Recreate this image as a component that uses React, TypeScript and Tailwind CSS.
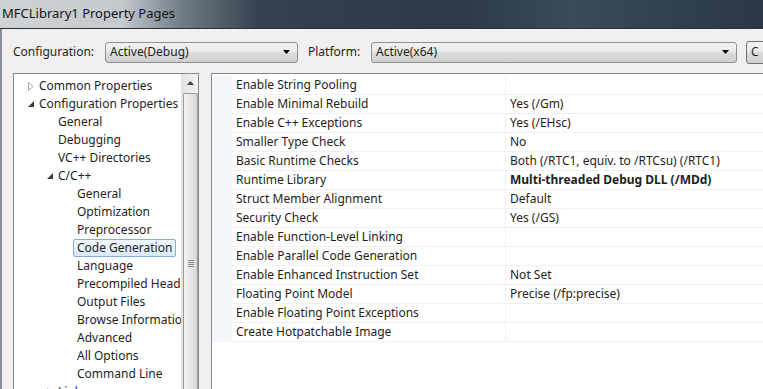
import React from "react";

const treeItems: { label: string; indent: number; expander?: "closed" | "open"; selected?: boolean }[] = [
  { label: "Common Properties", indent: 38, expander: "closed" },
  { label: "Configuration Properties", indent: 38, expander: "open" },
  { label: "General", indent: 57 },
  { label: "Debugging", indent: 57 },
  { label: "VC++ Directories", indent: 57 },
  { label: "C/C++", indent: 57, expander: "open" },
  { label: "General", indent: 76 },
  { label: "Optimization", indent: 76 },
  { label: "Preprocessor", indent: 76 },
  { label: "Code Generation", indent: 76, selected: true },
  { label: "Language", indent: 76 },
  { label: "Precompiled Headers", indent: 76 },
  { label: "Output Files", indent: 76 },
  { label: "Browse Information", indent: 76 },
  { label: "Advanced", indent: 76 },
  { label: "All Options", indent: 76 },
  { label: "Command Line", indent: 76 },
  { label: "Linker", indent: 57, expander: "closed" },
];

const props: { name: string; value: string; bold?: boolean }[] = [
  { name: "Enable String Pooling", value: "" },
  { name: "Enable Minimal Rebuild", value: "Yes (/Gm)" },
  { name: "Enable C++ Exceptions", value: "Yes (/EHsc)" },
  { name: "Smaller Type Check", value: "No" },
  { name: "Basic Runtime Checks", value: "Both (/RTC1, equiv. to /RTCsu) (/RTC1)" },
  { name: "Runtime Library", value: "Multi-threaded Debug DLL (/MDd)", bold: true },
  { name: "Struct Member Alignment", value: "Default" },
  { name: "Security Check", value: "Yes (/GS)" },
  { name: "Enable Function-Level Linking", value: "" },
  { name: "Enable Parallel Code Generation", value: "" },
  { name: "Enable Enhanced Instruction Set", value: "Not Set" },
  { name: "Floating Point Model", value: "Precise (/fp:precise)" },
  { name: "Enable Floating Point Exceptions", value: "" },
  { name: "Create Hotpatchable Image", value: "" },
];

function ComboArrow() {
  return (
    <svg width="7" height="4" viewBox="0 0 7 4">
      <path d="M0 0h7L3.5 4z" fill="#000" />
    </svg>
  );
}

function Combo({ text, width }: { text: string; width: string }) {
  return (
    <div
      className={`${width} flex h-[21px] shrink-0 items-center justify-between rounded-[3px] border border-[#8e8f8f] bg-[linear-gradient(#f2f2f2_0%,#ebebeb_45%,#dddddd_50%,#cfcfcf_100%)] pl-[4px] pr-[7px]`}
    >
      <span>{text}</span>
      <ComboArrow />
    </div>
  );
}

function Expander({ kind }: { kind: "closed" | "open" }) {
  if (kind === "closed") {
    return (
      <svg width="6" height="9" viewBox="0 0 6 9">
        <path d="M0.5 0.5L5 4.5L0.5 8.5z" fill="none" stroke="#a6a6a6" />
      </svg>
    );
  }
  return (
    <svg width="6" height="6" viewBox="0 0 6 6">
      <path d="M6 0V6H0z" fill="#3c3c3c" />
    </svg>
  );
}

export default function App() {
  return (
    <div className="h-[389px] w-[763px] overflow-hidden bg-[#f0f0f0] font-['Noto_Sans','Open_Sans',sans-serif] text-[12px] text-[#1e1e1e]">
      {/* title bar */}
      <div className="flex h-[28px] items-center bg-[linear-gradient(90deg,#cfd3d6_0%,#c4c9cd_16%,#6e7a84_24%,#34424f_34%,#2c3a47_60%,#3b4a57_75%,#2a3845_100%)] pl-[2px] text-[13px] text-[#151515]">
        MFCLibrary1 Property Pages
      </div>
      <div className="h-px bg-[#2a3440]" />

      <div className="border-l-2 border-[#8a9098] pl-[11px]">
        {/* configuration row */}
        <div className="flex h-[44px] items-center pt-[2px]">
          <span className="w-[92px] shrink-0">Configuration:</span>
          <Combo text="Active(Debug)" width="w-[193px]" />
          <span className="ml-[10px] w-[63px] shrink-0">Platform:</span>
          <Combo text="Active(x64)" width="w-[366px]" />
          <div className="ml-[9px] flex h-[23px] w-[40px] shrink-0 items-center rounded-[3px] border border-[#707070] bg-[linear-gradient(#f2f2f2_0%,#ebebeb_45%,#dddddd_50%,#cfcfcf_100%)] pl-[4px]">
            C
          </div>
        </div>

        <div className="flex gap-[12px]">
          {/* tree */}
          <div className="flex h-[330px] w-[186px] shrink-0 border border-[#828790] bg-white">
            <div className="min-w-0 flex-1 overflow-hidden pt-[3px]">
              {treeItems.map((item, i) => (
                <div key={i} className="relative flex h-[18px] items-center whitespace-nowrap">
                  {item.expander && (
                    <div
                      className="absolute flex w-[8px] items-center justify-center"
                      style={{ left: item.indent - 25 }}
                    >
                      <Expander kind={item.expander} />
                    </div>
                  )}
                  <span
                    className={
                      item.selected
                        ? "rounded-[2px] border border-[#84acdd] bg-[linear-gradient(#f2f7fd,#dbe9f9)] px-[3px] leading-[16px]"
                        : ""
                    }
                    style={{ marginLeft: item.indent - 13 - (item.selected ? 4 : 0) }}
                  >
                    {item.label}
                  </span>
                </div>
              ))}
            </div>
            {/* scrollbar */}
            <div className="flex w-[17px] shrink-0 flex-col border-l border-[#e3e3e3] bg-[linear-gradient(90deg,#e3e3e3,#f2f2f2)] pl-[1px]">
              <div className="flex h-[17px] items-center justify-center">
                <svg width="7" height="4" viewBox="0 0 7 4">
                  <path d="M3.5 0L7 4H0z" fill="#404040" />
                </svg>
              </div>
              <div className="mt-[2px] flex flex-1 flex-col items-center rounded-t-[2px] border border-b-0 border-[#9b9b9b] bg-[linear-gradient(90deg,#f4f4f4_0%,#e8e8e8_50%,#d4d4d4_100%)] pt-[166px]">
                <div className="flex flex-col gap-[1px]">
                  <div className="h-px w-[6px] bg-[#8a8a8a]" />
                  <div className="h-px w-[6px] bg-[#8a8a8a]" />
                  <div className="h-px w-[6px] bg-[#8a8a8a]" />
                  <div className="h-px w-[6px] bg-[#8a8a8a]" />
                </div>
              </div>
            </div>
          </div>

          {/* property grid */}
          <div className="h-[330px] min-w-0 flex-1 border border-r-0 border-[#828790] bg-white pt-[2px]">
            {props.map((p, i) => (
              <div key={i} className="flex h-[19px]">
                <div className="w-[20px] shrink-0 bg-[#f3f7fc]" />
                <div className="flex w-[274px] shrink-0 items-center border-b border-r border-[#f0f0f0] pl-[4px] whitespace-nowrap">
                  {p.name}
                </div>
                <div
                  className={`flex min-w-0 flex-1 items-center border-b border-[#f0f0f0] pl-[4px] whitespace-nowrap ${
                    p.bold ? "font-bold" : ""
                  }`}
                >
                  {p.value}
                </div>
              </div>
            ))}
          </div>
        </div>
      </div>
    </div>
  );
}
